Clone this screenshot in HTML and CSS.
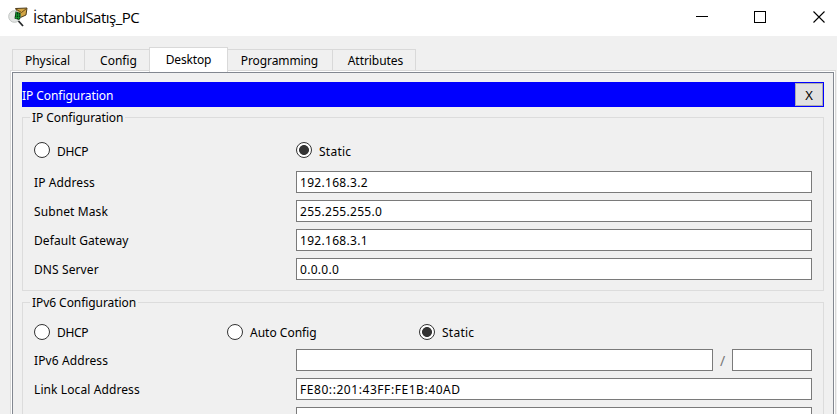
FILE: index.html
```
<!DOCTYPE html>
<html lang="tr">
<head>
<meta charset="utf-8">
<title>İstanbulSatış_PC</title>
<link rel="stylesheet" href="styles.css">
</head>
<body>
<header class="titlebar">
  <svg class="app-icon" width="20" height="20" viewBox="0 0 20 20">
    <path d="M7.500 1.500 19 1 18 8 12.500 10.500Z" fill="#d2a545" stroke="#3b2b10" stroke-width=".9"/>
    <path d="M8 2 13.500 5.500 18.500 1.500" fill="none" stroke="#6b4d18" stroke-width="1"/>
    <circle cx="6.500" cy="9.500" r="5.800" fill="#e4e6e5" stroke="#c0c4c2"/>
    <path d="M7.500 4.500 12.500 6 12.500 11 11 13 6.500 11.500Z" fill="#07380f"/>
    <path d="M8.500 5v7M10.500 6v6.500M7.500 8h5M7 10.500h5" stroke="#17a535" stroke-width=".7"/>
    <path d="M10.500 14 15 19" stroke="#25282a" stroke-width="1.800"/>
  </svg>
  <h1 class="title">İstanbulSatış_PC</h1>
  <svg class="controls" width="130" height="14" viewBox="0 0 130 14" fill="none" stroke="#000">
    <path d="M0 5.500h12M58.500.5h11v11h-11z" shape-rendering="crispEdges"/>
    <path d="M117.500.5l11 11M128.500.5l-11 11" stroke-width="1.1"/>
  </svg>
</header>
<nav class="tabs">
  <div class="tab t-physical"><span>Physical</span></div>
  <div class="tab t-config"><span>Config</span></div>
  <div class="tab t-desktop active"><span>Desktop</span></div>
  <div class="tab t-programming"><span>Programming</span></div>
  <div class="tab t-attributes"><span>Attributes</span></div>
</nav>
<main class="frame">
  <div class="pane">
    <div class="bar"><span>IP Configuration</span><button class="close">X</button></div>
    <section class="group g4">
      <h2 class="legend"><span>IP Configuration</span></h2>
      <div class="radios">
        <label class="radio"><i class="dot"></i><span class="dhcp">DHCP</span></label>
        <label class="radio"><i class="dot on"></i><span class="static">Static</span></label>
      </div>
      <div class="row"><span class="label">IP Address</span><div class="field"><span>192.168.3.2</span></div></div>
      <div class="row"><span class="label">Subnet Mask</span><div class="field"><span>255.255.255.0</span></div></div>
      <div class="row"><span class="label">Default Gateway</span><div class="field"><span>192.168.3.1</span></div></div>
      <div class="row"><span class="label">DNS Server</span><div class="field"><span>0.0.0.0</span></div></div>
    </section>
    <section class="group g6">
      <h2 class="legend"><span>IPv6 Configuration</span></h2>
      <div class="radios three">
        <label class="radio"><i class="dot"></i><span class="dhcp">DHCP</span></label>
        <label class="radio"><i class="dot"></i><span>Auto Config</span></label>
        <label class="radio"><i class="dot on"></i><span class="static">Static</span></label>
      </div>
      <div class="row"><span class="label">IPv6 Address</span><div class="field"></div><span class="slash">/</span><div class="field prefix"></div></div>
      <div class="row"><span class="label">Link Local Address</span><div class="field hex"><span>FE80::201:43FF:FE1B:40AD</span></div></div>
      <div class="row"><span class="label"></span><div class="field"></div></div>
    </section>
  </div>
</main>
</body>
</html>
```
FILE: styles.css
```
* { box-sizing: border-box; }
body {
  margin: 0;
  width: 837px;
  height: 414px;
  overflow: hidden;
  background: #f0f0f0;
  color: #000;
  font: 12px/16px "Noto Sans", sans-serif;
  white-space: nowrap;
}
h1, h2 { margin: 0; font-size: inherit; font-weight: normal; }
.titlebar {
  display: flex;
  height: 36px;
  padding: 7px 11px 0 8px;
  background: #fff;
}
.title { margin-left: 5px; font: 15px/20px "Open Sans", sans-serif; letter-spacing: -.5px; }
.controls { margin: 4px 0 0 auto; }
.tabs {
  display: flex;
  align-items: flex-end;
  height: 36px;
  padding: 0 0 1px 12px;
}
.tab {
  height: 22px;
  padding-top: 3px;
  border: 1px solid #d9d9d9;
  border-left: 0;
  text-align: center;
}
.t-physical { width: 73px; padding-right: 2px; border-left: 1px solid #d9d9d9; }
.t-config { width: 64px; padding-left: 3px; border-right: 0; }
.t-desktop { width: 79px; }
.t-programming { width: 105px; padding-right: 1px; letter-spacing: -.1px; }
.t-attributes { width: 83px; padding-left: 3px; letter-spacing: -.05px; }
.tab.active {
  position: relative;
  z-index: 1;
  height: 25px;
  margin-bottom: -1px;
  padding-top: 4px;
  border: 1px solid #d9d9d9;
  border-bottom: 0;
  background: #fff;
  letter-spacing: -.15px;
}
.frame {
  width: 826px;
  height: 344px;
  margin: -2px 0 0 10px;
  border: 1px solid #d9d9d9;
  border-bottom: 0;
  background: #fff;
  padding: 1px 1px 0;
}
.pane {
  height: 342px;
  overflow: hidden;
  padding: 9px 9px 0;
  border: 1px solid #828790;
  border-bottom: 0;
  background: #f0f0f0;
}
.bar {
  display: flex;
  justify-content: space-between;
  height: 25px;
  padding: 1px 1px 1px 0;
  background: #00f;
  color: #fff;
}
.bar span { padding-top: 5px; letter-spacing: -.06px; }
.close {
  width: 28px;
  height: 23px;
  padding: 1px 0 0;
  border: 1px solid #adadad;
  background: #e1e1e1;
  color: #000;
  font: 13px/16px "Noto Sans", sans-serif;
}
.group { border: 1px solid #dcdcdc; padding: 0 11px; }
.g4 { height: 174px; margin-top: 10px; }
.g6 { height: 112px; margin-top: 11px; border-bottom: 0; }
.legend { height: 16px; margin: -8px 0 0 -4px; }
.legend span { display: inline-block; padding: 0 2px; background: #f0f0f0; letter-spacing: -.06px; }
.radios { display: grid; grid-template-columns: 262px 1fr; margin: 16px 0 13px; }
.radios.three { grid-template-columns: 193px 192px 1fr; margin: 13px 0 9px; }
.radio { display: flex; height: 16px; gap: 7px; }
.radio span { padding-top: 2px; }
.three .radio span { padding-top: 1px; }
.dhcp { letter-spacing: -.3px; }
.static { letter-spacing: .25px; }
.dot {
  width: 16px;
  height: 16px;
  border: 1px solid #333;
  border-radius: 50%;
  background: #fff;
}
.dot.on { background: radial-gradient(circle, #333 4.6px, #fff 5.3px); }
.row { display: flex; height: 22px; margin-bottom: 7px; }
.label { width: 262px; padding-top: 4px; letter-spacing: .1px; }
.field {
  flex: 1;
  height: 22px;
  padding: 3px 3px 0;
  border: 1px solid #7a7a7a;
  background: #fff;
  letter-spacing: .3px;
}
.field.hex { letter-spacing: .56px; }
.slash { width: 19px; padding-top: 4px; text-align: center; font-size: 14px; color: #777; }
.prefix { flex: 0 0 80px; }
```
